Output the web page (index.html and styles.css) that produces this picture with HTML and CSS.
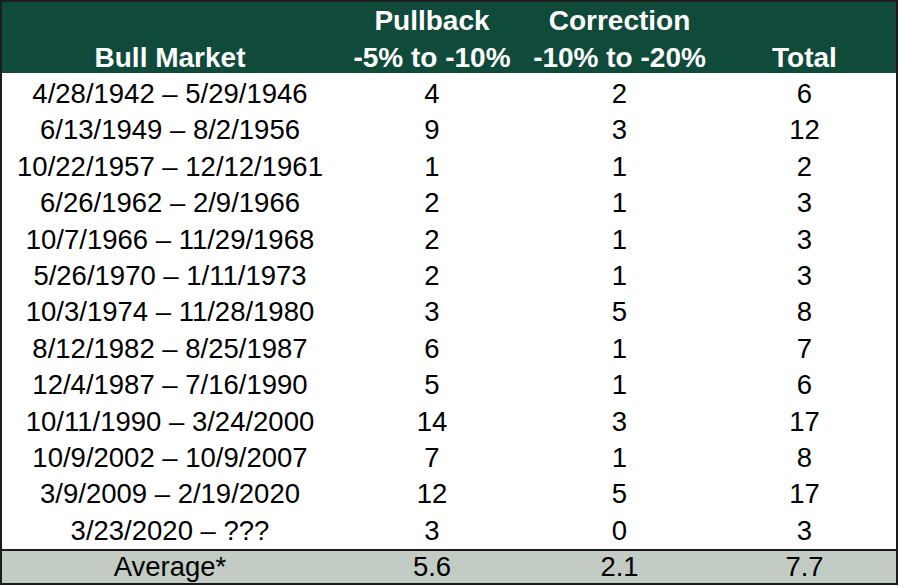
FILE: index.html
```html
<!DOCTYPE html>
<html>
<head>
<meta charset="utf-8">
<link rel="stylesheet" href="styles.css">
</head>
<body>
<div class="frame">
  <div class="head row">
    <div class="hcell">Bull Market</div>
    <div class="hcell"><span>Pullback</span><span>-5% to -10%</span></div>
    <div class="hcell"><span>Correction</span><span>-10% to -20%</span></div>
    <div class="hcell">Total</div>
  </div>
  <div class="body">
    <div class="row"><div>4/28/1942 – 5/29/1946</div><div>4</div><div>2</div><div>6</div></div>
    <div class="row"><div>6/13/1949 – 8/2/1956</div><div>9</div><div>3</div><div>12</div></div>
    <div class="row"><div>10/22/1957 – 12/12/1961</div><div>1</div><div>1</div><div>2</div></div>
    <div class="row"><div>6/26/1962 – 2/9/1966</div><div>2</div><div>1</div><div>3</div></div>
    <div class="row"><div>10/7/1966 – 11/29/1968</div><div>2</div><div>1</div><div>3</div></div>
    <div class="row"><div>5/26/1970 – 1/11/1973</div><div>2</div><div>1</div><div>3</div></div>
    <div class="row"><div>10/3/1974 – 11/28/1980</div><div>3</div><div>5</div><div>8</div></div>
    <div class="row"><div>8/12/1982 – 8/25/1987</div><div>6</div><div>1</div><div>7</div></div>
    <div class="row"><div>12/4/1987 – 7/16/1990</div><div>5</div><div>1</div><div>6</div></div>
    <div class="row"><div>10/11/1990 – 3/24/2000</div><div>14</div><div>3</div><div>17</div></div>
    <div class="row"><div>10/9/2002 – 10/9/2007</div><div>7</div><div>1</div><div>8</div></div>
    <div class="row"><div>3/9/2009 – 2/19/2020</div><div>12</div><div>5</div><div>17</div></div>
    <div class="row"><div>3/23/2020 – ???</div><div>3</div><div>0</div><div>3</div></div>
  </div>
  <div class="foot row"><div>Average*</div><div>5.6</div><div>2.1</div><div>7.7</div></div>
</div>
</body>
</html>
```
FILE: styles.css
```css
html, body {
  margin: 0;
  padding: 0;
  background: #ffffff;
}

.frame {
  width: 898px;
  height: 585px;
  box-sizing: border-box;
  border: 2px solid #1c1c1c;
  display: flex;
  flex-direction: column;
  font-family: "Liberation Sans", Arial, sans-serif;
  font-size: 27.5px;
  color: #000;
}

.row {
  display: grid;
  grid-template-columns: 336px 188px 187px 183px;
  text-align: center;
  white-space: nowrap;
}

.head {
  height: 71px;
  flex: none;
  background: #0f4a3a;
  color: #ffffff;
  font-weight: bold;
  font-size: 28px;
  line-height: 37px;
  align-items: start;
}

.hcell {
  height: 74px;
  display: flex;
  flex-direction: column;
  justify-content: flex-end;
  align-items: center;
}

.body {
  padding-top: 3px;
  flex: none;
}

.body .row {
  height: 36.4px;
  line-height: 36.4px;
}

.foot {
  flex: 1;
  background: #c3cbc5;
  border-top: 2px solid #1c1c1c;
  line-height: 32px;
}
```
